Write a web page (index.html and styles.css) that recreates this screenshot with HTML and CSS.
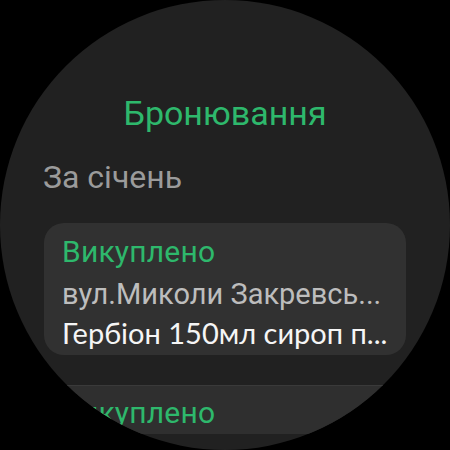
FILE: index.html
```html
<!DOCTYPE html>
<html lang="uk">
<head>
<meta charset="utf-8">
<link rel="stylesheet" href="styles.css">
</head>
<body>
<div class="watch">
  <div class="screen">
    <h1 class="title">Бронювання</h1>
    <div class="section">За січень</div>
    <div class="card">
      <div class="status">Викуплено</div>
      <div class="addr">вул.Миколи Закревсь...</div>
      <div class="item">Гербіон 150мл сироп п...</div>
    </div>
    <div class="card card-short">
      <div class="status">Викуплено</div>
    </div>
  </div>
</div>
</body>
</html>
```

FILE: styles.css
```css
html, body {
  margin: 0;
  padding: 0;
  background: #000;
}
.watch {
  width: 450px;
  height: 450px;
  border-radius: 50%;
  background: #212121;
  overflow: hidden;
  font-family: "Roboto", "Noto Sans", sans-serif;
}
.screen {
  display: flex;
  flex-direction: column;
  padding: 93px 44px 0 44px;
}
.title {
  margin: 0;
  font-weight: 400;
  font-size: 34px;
  line-height: 40px;
  color: #2eb86c;
  text-align: center;
}
.section {
  margin: 24px 0 0 -1px;
  font-size: 32px;
  line-height: 40px;
  color: #9b9b9b;
}
.card {
  margin-top: 26px;
  background: #313131;
  border-radius: 20px;
  padding: 8px 18px 4px 18px;
  font-size: 29px;
  white-space: nowrap;
  overflow: hidden;
}
.card-short {
  margin-top: 30px;
  padding: 6px 18px 0 18px;
  border-radius: 0;
  background: #2f2f2f;
  border-top: 1px solid #3a3a3a;
}
.status {
  color: #2eb86c;
  font-size: 30px;
  letter-spacing: 0.2px;
  line-height: 42px;
}
.addr {
  color: #bdbdbd;
  line-height: 42px;
}
.item {
  color: #f5f5f5;
  font-family: "Lato", "Noto Sans", sans-serif;
  line-height: 36px;
}
```
